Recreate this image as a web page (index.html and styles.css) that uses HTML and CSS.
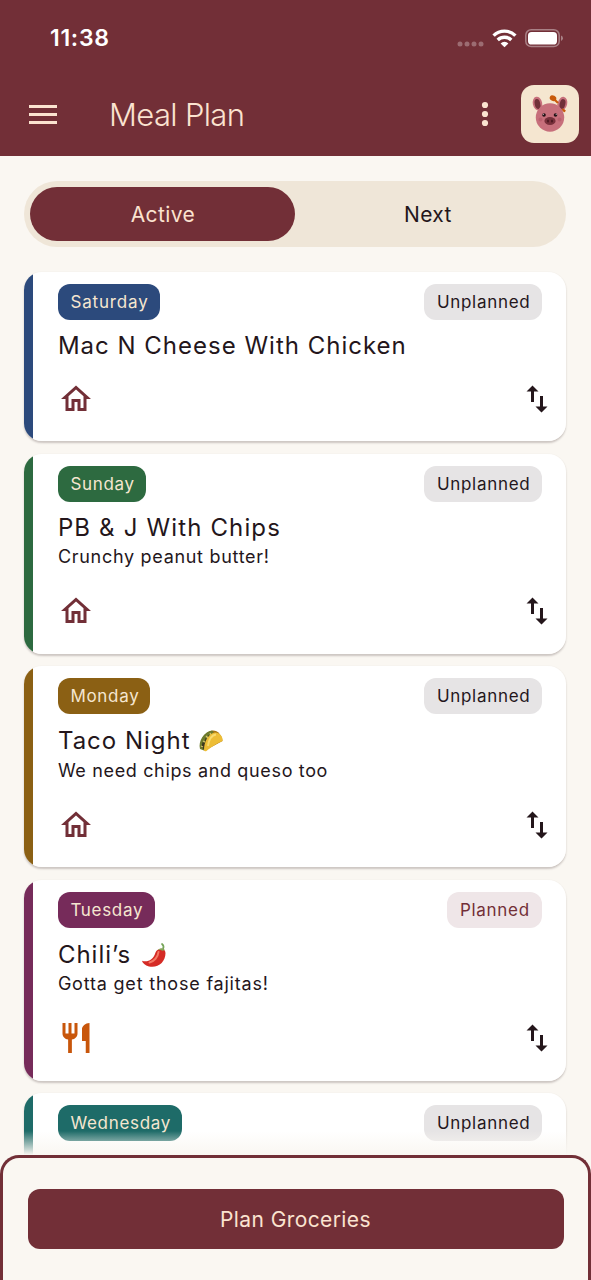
FILE: index.html
```html
<!DOCTYPE html>
<html lang="en">
<head>
<meta charset="utf-8">
<title>Meal Plan</title>
<link rel="stylesheet" href="styles.css">
</head>
<body>
<svg class="defs" width="0" height="0" aria-hidden="true">
  <symbol id="home" viewBox="0 0 24 24"><path d="M12 5.69l5 4.5V18h-2v-6H9v6H7v-7.81l5-4.5M12 3L2 12h3v8h6v-6h2v6h6v-8h3L12 3z"/></symbol>
  <symbol id="swap" viewBox="0 0 24 24"><path d="M16 17.01V10h-2v7.01h-3L15 21l4-3.99h-3zM9 3L5 6.99h3V14h2V6.99h3L9 3z"/></symbol>
  <symbol id="dining" viewBox="0 0 24 24"><path d="M11 9H9V2H7v7H5V2H3v7c0 2.12 1.66 3.84 3.75 3.97V22h2.5v-9.03C11.34 12.84 13 11.12 13 9V2h-2v7zm5-3v8h2.5v8H21V2c-2.76 0-5 2.24-5 4z"/></symbol>
</svg>
<div class="app">
  <header class="header">
    <div class="status">
      <span class="time">11:38</span>
      <div class="signals">
        <svg class="dots" width="28" height="6" viewBox="0 0 28 6"><circle cx="3" cy="3" r="2.5"/><circle cx="10" cy="3" r="2.5"/><circle cx="17" cy="3" r="2.5"/><circle cx="24" cy="3" r="2.5"/></svg>
        <svg class="wifi" width="25" height="19" viewBox="0 0 25 19"><path d="M1.6 6.6a15.4 15.4 0 0 1 21.8 0" /><path d="M5.7 11a9.8 9.8 0 0 1 13.6 0"/><path class="fill" d="M12.500 18.300L8.600 14.400a5.600 5.600 0 0 1 7.800 0z"/></svg>
        <svg class="battery" width="39" height="19" viewBox="0 0 39 19"><rect x=".8" y=".8" width="33.400" height="16.800" rx="5.400" class="shell"/><rect x="3" y="3" width="29" height="12.500" rx="3.600" fill="#fff"/><path class="cap" d="M36 6.500q2 .8 2 2.700t-2 2.700z"/></svg>
      </div>
    </div>
    <div class="toolbar">
      <svg class="menu" width="28" height="19" viewBox="0 0 28 19"><path d="M0 0h28v3H0zM0 8h28v3H0zM0 16h28v3H0z"/></svg>
      <h1 class="heading">Meal Plan</h1>
      <svg class="more" width="8" height="26" viewBox="0 0 8 26"><circle cx="4" cy="4" r="3.100"/><circle cx="4" cy="13" r="3.100"/><circle cx="4" cy="22" r="3.100"/></svg>
      <div class="avatar">
        <svg width="58" height="58" viewBox="0 0 58 58">
          <ellipse cx="16.500" cy="18.500" rx="4.700" ry="6.800" fill="#c76f7b" transform="rotate(-12 16.500 18.500)"/>
          <ellipse cx="16.500" cy="19" rx="2.800" ry="5" fill="#713039" transform="rotate(-12 16.500 19)"/>
          <path d="M37 19l7 7.500" stroke="#c85a0b" stroke-width="2"/>
          <ellipse cx="41.500" cy="18.500" rx="4.700" ry="6.800" fill="#c76f7b" transform="rotate(14 41.500 18.500)"/>
          <ellipse cx="41.500" cy="19" rx="2.800" ry="5" fill="#713039" transform="rotate(14 41.500 19)"/>
          <path d="M41 24l3 2.500" stroke="#c85a0b" stroke-width="2"/>
          <circle cx="29" cy="32.500" r="14.200" fill="#c76f7b"/>
          <ellipse cx="32" cy="13.200" rx="3.400" ry="2.700" fill="#c85a0b" transform="rotate(30 32 13.200)"/>
          <path d="M33 14l4 4" stroke="#c85a0b" stroke-width="2.200"/>
          <circle cx="23" cy="30" r="1.800" fill="#241216"/><circle cx="34.500" cy="30" r="1.800" fill="#241216"/>
          <circle cx="22.300" cy="29.300" r=".5" fill="#fff"/><circle cx="35.200" cy="29.300" r=".5" fill="#fff"/>
          <circle cx="19.500" cy="34.500" r="2" fill="#bb606e"/><circle cx="38.500" cy="34.500" r="2" fill="#bb606e"/>
          <ellipse cx="29" cy="36" rx="5.600" ry="4" fill="#78303b"/>
          <ellipse cx="27" cy="36" rx="1" ry="1.500" fill="#4c1720"/><ellipse cx="31" cy="36" rx="1" ry="1.500" fill="#4c1720"/>
        </svg>
      </div>
    </div>
  </header>
  <main class="content">
    <div class="tabs"><button class="tab tab-on">Active</button><button class="tab">Next</button></div>
    <section class="list">
      <article class="card short saturday">
        <div class="row"><span class="chip day">Saturday</span><span class="chip state">Unplanned</span></div>
        <h2 class="title">Mac N Cheese With Chicken</h2>
        <div class="row actions"><svg class="icon place"><use href="#home"/></svg><svg class="icon"><use href="#swap"/></svg></div>
      </article>
      <article class="card plain sunday">
        <div class="row"><span class="chip day">Sunday</span><span class="chip state">Unplanned</span></div>
        <h2 class="title">PB &amp; J With Chips</h2>
        <p class="note">Crunchy peanut butter!</p>
        <div class="row actions"><svg class="icon place"><use href="#home"/></svg><svg class="icon"><use href="#swap"/></svg></div>
      </article>
      <article class="card tall monday">
        <div class="row"><span class="chip day">Monday</span><span class="chip state">Unplanned</span></div>
        <h2 class="title">Taco Night
          <svg class="emoji" width="26" height="24" viewBox="0 0 26 24">
            <path d="M4 20C2 10 8 2 15 1.500c5 0 9 5 9.500 10.500L7 21.500z" fill="#a87512"/>
            <path d="M2 20C0 12 6 2.500 14 1.500c3 1 1 6-2 9L6 21.500z" fill="#6d7a2c"/>
            <path d="M3.500 18l1-5 2 1 1-5 2 1 1-4 2 1-2 6-4 8z" fill="#3c3920"/>
            <path d="M5 12l2 1M8 7l2 2M3 17l2 1M12 4l1 2" stroke="#d6c46e" stroke-width="1.300"/>
            <path d="M6 21.500C6 13 10 4.500 17 3.500c5 0 8.500 5 7.500 8.500C19 14 12 19 8.500 22q-2 .8-2.500-.5z" fill="#edbd36"/>
            <path d="M10 17C11 10 14 6 18 5.500" stroke="#f9db6e" stroke-width="2" fill="none"/>
          </svg></h2>
        <p class="note">We need chips and queso too</p>
        <div class="row actions"><svg class="icon place"><use href="#home"/></svg><svg class="icon"><use href="#swap"/></svg></div>
      </article>
      <article class="card tall tuesday">
        <div class="row"><span class="chip day">Tuesday</span><span class="chip state planned">Planned</span></div>
        <h2 class="title">Chili’s
          <svg class="emoji" width="26" height="26" viewBox="0 0 26 26">
            <path d="M22 7q1.500-3-1-5" stroke="#76a55a" stroke-width="1.700" fill="none" stroke-linecap="round"/>
            <path d="M16.500 8c3-2.500 8-1.500 8 3C24.500 20 17 26.500 8 24.500 4 23.500 1.500 21 1 18.800c6 2 11-1.500 13-6.800.6-1.700 1-3 2.500-4z" fill="#d52b25"/>
            <path d="M17.500 10c-.5 5-4.500 9.500-9 10.500" stroke="#f47965" stroke-width="2" fill="none" stroke-linecap="round"/>
            <path d="M17 8q3-3.500 7 0l-2.500.8-2-.7z" fill="#83a95a"/>
          </svg></h2>
        <p class="note">Gotta get those fajitas!</p>
        <div class="row actions"><svg class="icon dine"><use href="#dining"/></svg><svg class="icon"><use href="#swap"/></svg></div>
      </article>
      <article class="card plain wednesday">
        <div class="row"><span class="chip day">Wednesday</span><span class="chip state">Unplanned</span></div>
      </article>
    </section>
  </main>
  <footer class="sheet"><button class="primary">Plan Groceries</button></footer>
</div>
</body>
</html>
```

FILE: styles.css
```css
* { box-sizing: border-box; }
body { margin: 0; background: #faf7f2; color: #24161b; font-family: Inter, "Liberation Sans", sans-serif; }
h1, h2, p { margin: 0; font-weight: 400; }
button { border: 0; padding: 0; background: none; color: inherit; font: inherit; }
svg { display: block; flex: none; }
.defs { position: absolute; }
.app { display: flex; flex-direction: column; width: 591px; height: 1280px; overflow: hidden; }

.header { flex: none; height: 156px; background: #722f37; color: #fbe3d0; }
.status { display: flex; justify-content: space-between; height: 76px; padding: 0 29px 0 50px; align-items: center; }
.time { color: #fff; font-size: 23px; font-weight: 600; letter-spacing: .7px; }
.signals { display: flex; align-items: center; }
.dots { fill: #9c6c72; margin: 12px 7px 0 0; }
.wifi { fill: none; stroke: #fff; stroke-width: 3.4; margin-right: 8px; }
.wifi .fill { fill: #fff; stroke: none; }
.shell { fill: none; stroke: #a98186; stroke-width: 1.5; }
.cap { fill: #a98186; }
.battery { margin-right: -2px; }
.toolbar { display: flex; align-items: center; height: 76px; padding: 0 12px 0 29px; }
.menu, .more { fill: #fbe3d0; }
.heading { flex: 1; margin-left: 52px; font-size: 31px; font-weight: 350; letter-spacing: -.65px; }
.more { margin-right: 32px; }
.avatar { width: 58px; height: 58px; border-radius: 13px; background: #f5e6d0; }

.content { flex: none; height: 1000px; padding: 25px 24.6px 0 24.4px; overflow: hidden; }
.tabs { display: flex; height: 66px; padding: 6px; border-radius: 33px; background: #efe6d8; }
.tab { flex: 1; border-radius: 27px; font-size: 21px; letter-spacing: .4px; }
.tab-on { background: #722f37; color: #fbe3d0; }

.list { display: flex; flex-direction: column; gap: 12.5px; margin-top: 25px; }
.card { flex: none; display: flex; flex-direction: column; padding: 12px 24px 0 33.5px; border-radius: 18px; background: linear-gradient(to right, var(--day) 9.3px, #fff 9.3px); box-shadow: 0 1.5px 2px rgba(60, 40, 40, .24); }
.short { height: 169px; }
.plain { height: 200px; }
.tall { height: 201px; }
.row { display: flex; justify-content: space-between; align-items: center; }
.chip { height: 36px; padding-left: 12.5px; border-radius: 12px; font-size: 17px; line-height: 37px; letter-spacing: .7px; white-space: nowrap; }
.day { width: var(--chip); background: var(--day); color: #f5e6d0; }
.state { width: 118px; background: #e6e4e5; }
.planned { width: 95px; background: #efe6e8; color: #722f37; }
.title { display: flex; align-items: center; gap: 8px; height: 30px; margin-top: 11px; font-size: 24px; line-height: 30px; letter-spacing: 1px; white-space: nowrap; }
.tall .title { height: 32px; margin-top: 11px; }
.note { height: 24px; margin-top: 2px; font-size: 18px; line-height: 24px; letter-spacing: .7px; white-space: nowrap; }
.tall .note { margin-top: 1.5px; }
.actions { margin: auto -12.2px 24.5px 0; }
.icon { width: 36px; height: 36px; fill: #24161b; }
.place { fill: #722f37; }
.dine { fill: #c8560b; }
.saturday { --day: #2c4a7c; --chip: 102px; }
.saturday .day { letter-spacing: .85px; }
.sunday { --day: #2d6a40; --chip: 88px; }
.sunday .title { letter-spacing: 1.15px; }
.monday { --day: #8b6014; --chip: 92px; }
.monday .title { gap: 7.5px; }
.monday .note { letter-spacing: .65px; }
.tuesday { --day: #762b5a; --chip: 97px; }
.tuesday .title { gap: 10px; }
.tuesday .note { letter-spacing: .8px; }
.wednesday { --day: #1e6b68; --chip: 124px; }

.sheet { position: relative; flex: none; height: 128px; margin-top: -1px; padding: 31px 24.5px 0; border: 3px solid #722f37; border-bottom: 0; border-radius: 19px 19px 0 0; background: #faf7f2; }
.sheet::before { content: ""; position: absolute; left: 0; right: 0; top: -27px; height: 24px; background: linear-gradient(rgba(250, 247, 242, 0), #faf7f2); }
.primary { display: block; width: 100%; height: 60px; border-radius: 12px; background: #722f37; color: #fbe3d0; font-size: 21px; letter-spacing: .4px; }
```
